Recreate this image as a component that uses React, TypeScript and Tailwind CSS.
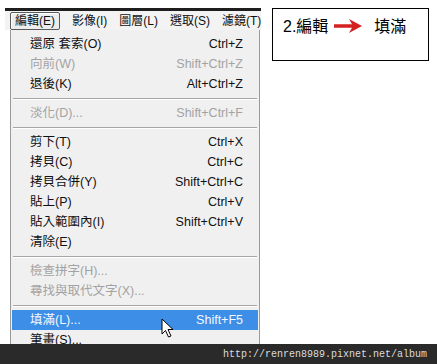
import React from "react";

type Item =
  | { kind: "item"; label: string; shortcut?: string; disabled?: boolean; active?: boolean }
  | { kind: "sep" };

const items: Item[] = [
  { kind: "item", label: "還原 套索(O)", shortcut: "Ctrl+Z" },
  { kind: "item", label: "向前(W)", shortcut: "Shift+Ctrl+Z", disabled: true },
  { kind: "item", label: "退後(K)", shortcut: "Alt+Ctrl+Z" },
  { kind: "sep" },
  { kind: "item", label: "淡化(D)...", shortcut: "Shift+Ctrl+F", disabled: true },
  { kind: "sep" },
  { kind: "item", label: "剪下(T)", shortcut: "Ctrl+X" },
  { kind: "item", label: "拷貝(C)", shortcut: "Ctrl+C" },
  { kind: "item", label: "拷貝合併(Y)", shortcut: "Shift+Ctrl+C" },
  { kind: "item", label: "貼上(P)", shortcut: "Ctrl+V" },
  { kind: "item", label: "貼入範圍內(I)", shortcut: "Shift+Ctrl+V" },
  { kind: "item", label: "清除(E)" },
  { kind: "sep" },
  { kind: "item", label: "檢查拼字(H)...", disabled: true },
  { kind: "item", label: "尋找與取代文字(X)...", disabled: true },
  { kind: "sep" },
  { kind: "item", label: "填滿(L)...", shortcut: "Shift+F5", active: true },
  { kind: "item", label: "筆畫(S)..." },
];

const font = { fontFamily: '"Liberation Sans", "Noto Sans CJK TC", sans-serif' };

export default function App() {
  return (
    <div
      className="relative w-[437px] h-[364px] overflow-hidden bg-white text-[12.5px] text-[#111]"
      style={font}
    >
      <div className="flex items-start">
        {/* Photoshop menu area */}
        <div className="ml-[5px] mt-[8px] flex w-[256px] shrink-0 flex-col">
          <div className="h-[3px] bg-[#1e1e1e]" />
          {/* menu bar */}
          <div className="flex h-[19px] items-center whitespace-nowrap bg-[#f3f3f3] pl-[5px] gap-[12px] text-[12px] overflow-hidden">
            <div className="flex h-[18px] shrink-0 items-center rounded-[2px] border border-[#5a5a5a] bg-[#ececec] px-[4px] shadow-[inset_1px_1px_0_#fff]">
              編輯(E)
            </div>
            <span className="shrink-0">影像(I)</span>
            <span className="shrink-0">圖層(L)</span>
            <span className="shrink-0">選取(S)</span>
            <span className="shrink-0">濾鏡(T)</span>
          </div>
          {/* dropdown */}
          <div className="ml-[5px] w-[250px] border-l border-r border-[#9a9a9a] bg-[#f0f0f0] pt-[4px] pb-[20px]">
            {items.map((it, i) =>
              it.kind === "sep" ? (
                <div key={i} className="flex h-[9px] items-center px-[2px]">
                  <div className="h-[2px] w-full border-t border-[#a6a6a6] border-b border-b-white" />
                </div>
              ) : (
                <div
                  key={i}
                  className={
                    "mx-[1px] flex h-[20px] items-center justify-between whitespace-nowrap pl-[18px] pr-[15px] " +
                    (it.active ? "bg-[#3d8ee6] text-[#f4f8ff] " : "") +
                    (it.disabled ? "text-[#a3a3a3]" : "")
                  }
                >
                  <span>{it.label}</span>
                  {it.shortcut && <span>{it.shortcut}</span>}
                </div>
              )
            )}
          </div>
        </div>

        {/* annotation box */}
        <div className="ml-[11px] mt-[8px] flex h-[53px] w-[157px] items-start whitespace-nowrap border border-black pl-[10px] pt-[6px] text-[16px] text-black">
          <span>2.編輯</span>
          <svg width="32" height="16" viewBox="0 0 32 16" className="ml-[4px] mt-[3px]">
            <line x1="2" y1="8" x2="22" y2="8" stroke="#d42020" strokeWidth="3.5" />
            <polygon points="17,1 30,8 17,15 21,8" fill="#d42020" />
          </svg>
          <span className="ml-[10px]">填滿</span>
        </div>
      </div>

      {/* mouse cursor */}
      <svg
        className="absolute left-[161px] top-[318px]"
        width="14"
        height="20"
        viewBox="0 0 14 20"
      >
        <path
          d="M1 1 L1 16 L4.5 12.5 L7.5 19 L10 18 L7 11.5 L12 11.5 Z"
          fill="#ffffff"
          stroke="#000"
          strokeWidth="1"
          strokeLinejoin="round"
        />
      </svg>

      {/* watermark bar */}
      <div className="absolute bottom-0 left-0 flex h-[20px] w-full items-center justify-end bg-[#2a2a2a] pr-[10px]">
        <span
          className="text-[10px] text-[#dcdcdc]"
          style={{ fontFamily: '"Liberation Mono", monospace' }}
        >
          http://renren8989.pixnet.net/album
        </span>
      </div>
    </div>
  );
}
